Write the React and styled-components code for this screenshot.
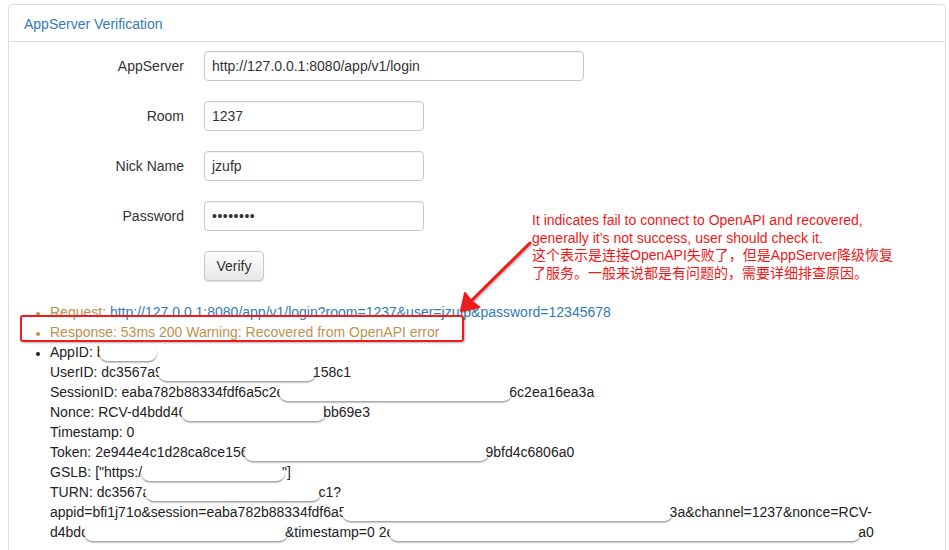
import React from "react";
import styled, { createGlobalStyle } from "styled-components";

const GlobalStyle = createGlobalStyle`
  body {
    margin: 0;
    background: #fff;
    font-family: "Liberation Sans", Arial, "Noto Sans CJK SC", sans-serif;
    font-size: 14px;
    color: #333;
  }
`;

const Page = styled.div`
  padding: 4px 3px 0 8px;
`;

const Panel = styled.div`
  position: relative;
  border: 1px solid #ddd;
  border-radius: 4px;
  background: #fff;
  height: 560px;
`;

const PanelHeading = styled.div`
  padding: 11px 15px 8px;
  line-height: 17px;
  border-bottom: 1px solid #ddd;
  color: #337ab7;
  font-size: 14px;
`;

const PanelBody = styled.div`
  padding: 9px 15px 15px;
`;

const Form = styled.div`
  display: grid;
  grid-template-columns: 160px 1fr;
  column-gap: 20px;
  row-gap: 20px;
  align-items: center;
`;

const Label = styled.label`
  text-align: right;
  color: #333;
  line-height: 20px;
`;

const Input = styled.div`
  box-sizing: border-box;
  width: ${(p) => p.$width}px;
  height: 30px;
  padding: 0 7px;
  border: 1px solid #c9c9c9;
  border-radius: 4px;
  box-shadow: inset 0 1px 1px rgba(0, 0, 0, 0.06);
  display: flex;
  align-items: center;
  color: #333;
  letter-spacing: ${(p) => (p.$secret ? "0.5px" : "0")};
`;

const Button = styled.button`
  box-sizing: border-box;
  justify-self: start;
  width: 60px;
  height: 30px;
  border: 1px solid #c8c8c8;
  border-radius: 4px;
  background: linear-gradient(#fdfdfd, #e8e8e8);
  box-shadow: 0 1px 1px rgba(0, 0, 0, 0.12);
  font-family: inherit;
  font-size: 14px;
  color: #333;
`;

const Results = styled.ul`
  margin: 21px 0 0;
  padding-left: 26px;
  line-height: 20px;
`;

const Item = styled.li`
  position: relative;
  color: ${(p) => (p.$warn ? "#c0914c" : "#222")};
  &::marker {
    font-size: 12px;
  }
`;

const Link = styled.a`
  color: #337ab7;
  text-decoration: none;
`;

const Line = styled.div`
  white-space: nowrap;
  height: 20px;
`;

const Redact = styled.span`
  display: inline-block;
  width: ${(p) => p.$w}px;
  height: 17px;
  margin: 0 -3px 0 -5px;
  vertical-align: -4px;
  background: #fff;
  border-radius: 9px;
  box-shadow: 0 1.5px 1.5px rgba(0, 0, 0, 0.38);
`;

const Highlight = styled.span`
  position: absolute;
  left: -30px;
  top: -7px;
  width: 440px;
  height: 23px;
  border: 2px solid #ee1c1c;
  border-radius: 3px;
  box-shadow: 1px 1px 2px rgba(0, 0, 0, 0.3);
  pointer-events: none;
`;

const Note = styled.div`
  position: absolute;
  left: 523px;
  top: 207px;
  color: #f21717;
  font-size: 14px;
  line-height: 17.7px;
  font-family: "Liberation Sans", Arial, "Noto Sans CJK SC", sans-serif;
`;

const Arrow = styled.svg`
  position: absolute;
  left: 440px;
  top: 230px;
  overflow: visible;
`;

export default function App() {
  return (
    <>
      <GlobalStyle />
      <Page>
        <Panel>
          <PanelHeading>AppServer Verification</PanelHeading>
          <PanelBody>
            <Form>
              <Label>AppServer</Label>
              <Input $width={380}>http://127.0.0.1:8080/app/v1/login</Input>
              <Label>Room</Label>
              <Input $width={220}>1237</Input>
              <Label>Nick Name</Label>
              <Input $width={220}>jzufp</Input>
              <Label>Password</Label>
              <Input $width={220} $secret>••••••••</Input>
              <span />
              <Button>Verify</Button>
            </Form>
            <Results>
              <Item $warn>
                Request:{" "}
                <Link>http://127.0.0.1:8080/app/v1/login?room=1237&amp;user=jzufp&amp;password=12345678</Link>
              </Item>
              <Item $warn>
                Response: 53ms 200 Warning: Recovered from OpenAPI error
                <Highlight />
              </Item>
              <Item>
                <Line>
                  AppID: b<Redact $w={58} />
                </Line>
                <Line>
                  UserID: dc3567a9<Redact $w={158} />
                  158c1
                </Line>
                <Line>
                  SessionID: eaba782b88334fdf6a5c2e<Redact $w={233} />
                  6c2ea16ea3a
                </Line>
                <Line>
                  Nonce: RCV-d4bdd46<Redact $w={145} />
                  bb69e3
                </Line>
                <Line>Timestamp: 0</Line>
                <Line>
                  Token: 2e944e4c1d28ca8ce156<Redact $w={245} />
                  9bfd4c6806a0
                </Line>
                <Line>
                  GSLB: ["https://<Redact $w={144} />"]
                </Line>
                <Line>
                  TURN: dc3567a<Redact $w={176} />
                  c1?
                </Line>
                <Line>
                  appid=bfi1j71o&amp;session=eaba782b88334fdf6a5<Redact $w={331} />
                  3a&amp;channel=1237&amp;nonce=RCV-
                </Line>
                <Line>
                  d4bdd<Redact $w={204} />
                  &amp;timestamp=0 2e<Redact $w={472} />
                  a0
                </Line>
              </Item>
            </Results>
          </PanelBody>
          <Note>
            It indicates fail to connect to OpenAPI and recovered,
            <br />
            generally it’s not success, user should check it.
            <br />
            这个表示是连接OpenAPI失败了，但是AppServer降级恢复
            <br />
            了服务。一般来说都是有问题的，需要详细排查原因。
          </Note>
          <Arrow width="90" height="80">
            <g style={{ filter: "drop-shadow(1px 1px 1px rgba(0,0,0,0.35))" }}>
              <line x1="81" y1="8" x2="20" y2="68" stroke="#ee1c1c" strokeWidth="3" strokeLinecap="round" />
              <path d="M12 76 L16 58 L22 66 L30 72 Z" fill="#ee1c1c" stroke="#ee1c1c" strokeWidth="2" strokeLinejoin="round" />
            </g>
          </Arrow>
        </Panel>
      </Page>
    </>
  );
}
